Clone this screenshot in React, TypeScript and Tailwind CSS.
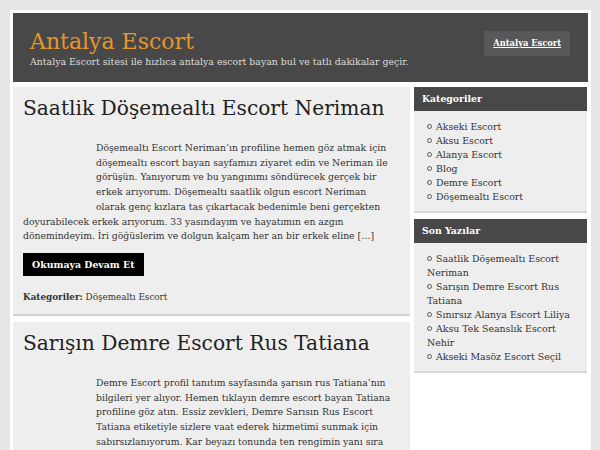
import React from "react";

const serif = { fontFamily: '"DejaVu Serif", serif' };

function Post({ title, body, first }: { title: string; body: string; first?: boolean }) {
  return (
    <article className="bg-[#eeeeee] border-b-[2px] border-[#d2d2d2] pl-[10px] pr-[14px] pt-[8px] pb-[10px]">
      <h2 className="text-[20.2px] leading-[26px] text-[#222]">{title}</h2>
      <div className="mt-[20px] text-[9.25px] leading-[14.7px] text-[#333]">
        <div className="float-left w-[63px] h-[72px] mr-[10px]"></div>
        <p>{body}</p>
      </div>
      {first && (
        <>
          <div className="clear-both pt-[7px]">
            <a className="inline-block bg-black text-white font-bold text-[9.4px] h-[23px] leading-[23px] px-[9px]">Okumaya Devam Et</a>
          </div>
          <div className="mt-[14px] text-[8.8px] leading-[14px] text-[#333]">
            <span className="font-bold">Kategoriler:</span> Döşemealtı Escort
          </div>
        </>
      )}
    </article>
  );
}

function Widget({ title, items }: { title: string; items: string[] }) {
  return (
    <section className="border-b-[2px] border-[#d8d8d8]">
      <h3 className="bg-[#484848] h-[24px] leading-[24px] px-[8px] text-white font-bold text-[9.3px]">{title}</h3>
      <ul className="bg-[#eeeeee] pl-[13px] pr-[15px] pt-[9px] pb-[7px] text-[9.4px] leading-[14px] text-[#333]">
        {items.map((i) => (
          <li key={i}>
            <span className="inline-block w-[5px] h-[5px] rounded-full border border-[#555] mr-[4px] align-[1px]"></span>
            {i}
          </li>
        ))}
      </ul>
    </section>
  );
}

export default function App() {
  return (
    <div className="bg-[#e6e6e6] pt-[10px] px-[10px] overflow-hidden h-[450px]" style={serif}>
      <div className="bg-white p-[3px] w-[581px] min-h-[440px]">
        <header className="bg-[#484848] h-[69px] flex justify-between pl-[17px] pr-[18px]">
          <div className="pt-[16px]">
            <div className="text-[22px] leading-[26px] text-[#e5962c]">Antalya Escort</div>
            <div className="text-[9.4px] leading-[13px] text-[#dddddd]">Antalya Escort sitesi ile hızlıca antalya escort bayan bul ve tatlı dakikalar geçir.</div>
          </div>
          <div className="pt-[18px]">
            <a className="block bg-[#585858] h-[25px] leading-[25px] px-[9px] text-white font-bold underline text-[8.3px]">Antalya Escort</a>
          </div>
        </header>
        <div className="flex gap-[4px] mt-[5px]">
          <main className="w-[397px] flex flex-col gap-[6px]">
            <Post
              first
              title="Saatlik Döşemealtı Escort Neriman"
              body="Döşemealtı Escort Neriman’ın profiline hemen göz atmak için döşemealtı escort bayan sayfamızı ziyaret edin ve Neriman ile görüşün. Yanıyorum ve bu yangınımı söndürecek gerçek bir erkek arıyorum. Döşemealtı saatlik olgun escort Neriman olarak genç kızlara tas çıkartacak bedenimle beni gerçekten doyurabilecek erkek arıyorum. 33 yasındayım ve hayatımın en azgın dönemindeyim. İri göğüslerim ve dolgun kalçam her an bir erkek eline […]"
            />
            <Post
              title="Sarışın Demre Escort Rus Tatiana"
              body="Demre Escort profil tanıtım sayfasında şarısın rus Tatiana’nın bilgileri yer alıyor. Hemen tıklayın demre escort bayan Tatiana profiline göz atın. Essiz zevkleri, Demre Sarısın Rus Escort Tatiana etiketiyle sizlere vaat ederek hizmetimi sunmak için sabırsızlanıyorum. Kar beyazı tonunda ten rengimin yanı sıra mavi gözlerim ve upuzun sarı saçlarımla sizleri bekliyorum."
            />
          </main>
          <aside className="w-[173px] flex flex-col gap-[6px]">
            <Widget
              title="Kategoriler"
              items={["Akseki Escort", "Aksu Escort", "Alanya Escort", "Blog", "Demre Escort", "Döşemealtı Escort"]}
            />
            <Widget
              title="Son Yazılar"
              items={[
                "Saatlik Döşemealtı Escort Neriman",
                "Sarışın Demre Escort Rus Tatiana",
                "Sınırsız Alanya Escort Liliya",
                "Aksu Tek Seanslık Escort Nehir",
                "Akseki Masöz Escort Seçil",
              ]}
            />
          </aside>
        </div>
      </div>
    </div>
  );
}
